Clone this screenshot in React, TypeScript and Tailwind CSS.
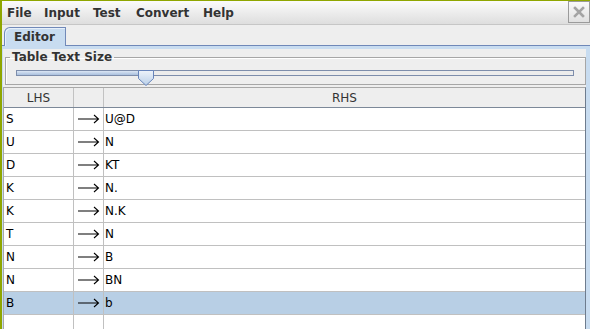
const MENUS = [
  { label: 'File', w: 'w-[37px]' },
  { label: 'Input', w: 'w-[49px]' },
  { label: 'Test', w: 'w-[43px]' },
  { label: 'Convert', w: 'w-[67px]' },
  { label: 'Help', w: 'w-[40px]' },
];

const RULES = [
  ['S', 'U@D'],
  ['U', 'N'],
  ['D', 'KT'],
  ['K', 'N.'],
  ['K', 'N.K'],
  ['T', 'N'],
  ['N', 'B'],
  ['N', 'BN'],
  ['B', 'b'],
  ['', ''],
];

const SELECTED = 8;

function CloseIcon() {
  return (
    <svg width="12" height="12" viewBox="0 0 12 12">
      <path d="M2 2 L10 10 M10 2 L2 10" stroke="#a4a4a4" strokeWidth="2.6" strokeLinecap="square" />
    </svg>
  );
}

function Arrow() {
  return (
    <svg width="22" height="10" viewBox="0 0 22 10">
      <path d="M0 5 H20.5 M16 1 L20.5 5 L16 9" stroke="#000" strokeWidth="1.1" fill="none" />
    </svg>
  );
}

function Thumb() {
  return (
    <svg width="16" height="16" viewBox="0 0 16 16">
      <defs>
        <linearGradient id="thumbFill" x1="0" y1="0" x2="0" y2="1">
          <stop offset="0" stopColor="#eef3fa" />
          <stop offset="1" stopColor="#b9cfe8" />
        </linearGradient>
      </defs>
      <path d="M0.5 0.5 H15.5 V8.5 L8 15.5 L0.5 8.5 Z" fill="url(#thumbFill)" stroke="#6784bb" />
    </svg>
  );
}

export default function App() {
  return (
    <div className="w-[590px] h-[329px] overflow-hidden bg-[#eeeeee] border-t border-l-2 border-[#8fa600] flex flex-col font-['DejaVu_Sans',sans-serif] text-[12px]">
      {/* menu bar */}
      <div className="h-[24px] shrink-0 flex border-b border-[#c6c6c6] bg-gradient-to-b from-[#fbfbfb] to-[#dedede]">
        <div className="flex items-center pl-[5px] font-bold text-[#333]">
          {MENUS.map((m) => (
            <span key={m.label} className={m.w}>{m.label}</span>
          ))}
        </div>
        <div className="ml-auto w-[22px] h-[22px] border border-[#9b9b9b] flex items-center justify-center">
          <CloseIcon />
        </div>
      </div>

      {/* tabs */}
      <div className="pt-[2px] pl-[2px] flex shrink-0 relative z-10">
        <div className="w-[62px] h-[19px] -mb-px border-l border-t border-r border-[#7189b8] rounded-tl-[6px] bg-[#c8dcf0] font-bold text-[#333] pl-[9px] leading-[18px] shadow-[inset_1px_1px_0_#e6effa]">
          Editor
        </div>
      </div>

      <div className="flex-1 flex flex-col border-t border-[#6f88b8] bg-[#c8dcf0] pt-[3px] pl-px pr-[4px]">
        <div className="flex-1 flex flex-col bg-[#eeeeee]">
          {/* slider */}
          <fieldset className="ml-[2px] border border-[#a6a6a6] shadow-[inset_1px_1px_0_#ffffff] h-[36px]">
            <legend className="ml-[4px] px-[2px] font-bold text-[#333] leading-[15px] pt-px">Table Text Size</legend>
            <div className="relative ml-[10px] w-[558px] h-[16px] mt-[2px]">
              <div className="mt-[5px] h-[6px] border border-[#7d8dab] bg-[#ececec] flex">
                <div className="w-[122px] bg-gradient-to-b from-[#dbe6f4] to-[#a9c0de]" />
              </div>
              <div className="absolute left-[122px] top-0">
                <Thumb />
              </div>
            </div>
          </fieldset>

          {/* table */}
          <div className="mt-[2px] flex-1 flex flex-col border-t border-l border-[#a8a8a8] border-r border-r-[#6e7c8e] bg-white text-black">
            <div className="h-[20px] shrink-0 flex border-b border-[#7c8898] bg-[#eeeeee] text-[#333]">
              <div className="w-[70px] border-r border-[#c2c2c2] flex items-center justify-center">LHS</div>
              <div className="w-[30px] border-r border-[#c2c2c2]" />
              <div className="flex-1 flex items-center justify-center">RHS</div>
            </div>
            {RULES.map(([lhs, rhs], i) => (
              <div
                key={i}
                className={`h-[23px] shrink-0 flex border-b border-[#c0c0c0] ${i === SELECTED ? 'bg-[#b8cfe5]' : ''}`}
              >
                <div className="w-[70px] border-r border-[#c0c0c0] flex items-center pl-[2px]">{lhs}</div>
                <div className="w-[30px] border-r border-[#c0c0c0] flex items-center pl-[4px]">{lhs ? <Arrow /> : null}</div>
                <div className="flex-1 flex items-center pl-px">{rhs}</div>
              </div>
            ))}
          </div>
        </div>
      </div>
    </div>
  );
}
